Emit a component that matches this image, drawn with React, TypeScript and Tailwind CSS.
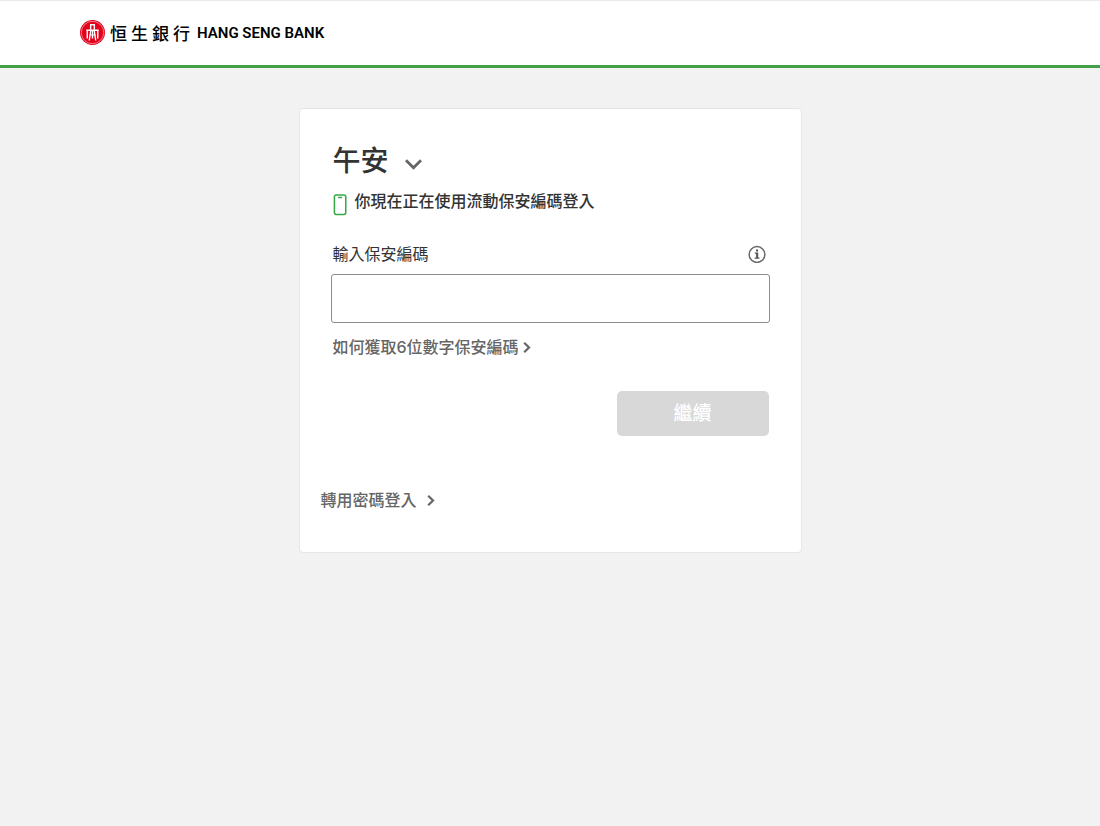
import { useState } from 'react';

const LOGO_CHARACTERS = ['恒', '生', '銀', '行'];

function BankEmblem() {
  return (
    <svg viewBox="0 0 50 50" className="size-[25px] shrink-0" aria-hidden="true">
      <circle cx="25" cy="25" r="25" fill="#e2001a" />
      <circle cx="25" cy="25" r="22.4" fill="none" stroke="#fff" strokeWidth="1" />
      <g fill="none" stroke="#fff" strokeWidth="2.8">
        <path d="M20 9.500h10M21.300 9v10M28.700 9v10" />
        <path d="M12.500 20.500h25M14.500 20.500V37M35.500 20.500V37" />
        <path d="M21.800 19 18.500 41M28.200 19l3.300 22M25 20v17" />
        <path d="M19.500 30h11" strokeWidth="2" />
      </g>
    </svg>
  );
}

function Logo() {
  return (
    <a href="#" className="flex items-center text-black">
      <BankEmblem />
      <span
        lang="zh-Hant"
        className="ml-[5px] flex gap-1 font-['Noto_Sans_CJK_TC',sans-serif] text-[17px] leading-6 font-medium"
      >
        {LOGO_CHARACTERS.map((character) => (
          <span key={character}>{character}</span>
        ))}
      </span>
      <span className="ml-[7px] font-['Roboto',sans-serif] text-[15px] leading-6 font-semibold whitespace-nowrap">
        HANG SENG BANK
      </span>
    </a>
  );
}

function ChevronRight() {
  return (
    <svg viewBox="0 0 8 12" className="h-3 w-2 shrink-0" fill="none" stroke="#666" strokeWidth="2.2" aria-hidden="true">
      <path d="M1.2 1.8 6 6.500 1.2 11.2" />
    </svg>
  );
}

export default function App() {
  const [code, setCode] = useState('');

  return (
    <div
      lang="zh-Hant"
      className="min-h-screen bg-[#f2f2f2] font-['Inter','Noto_Sans_CJK_TC',sans-serif] text-[#333]"
    >
      <header className="border-t border-b-3 border-t-[#eaeaea] border-b-[#42a048] bg-white px-20 pt-[19px] pb-5">
        <div className="flex h-[25px] items-center">
          <Logo />
        </div>
      </header>

      <main className="px-4 py-10">
        <section className="mx-auto max-w-[503px] rounded border border-[#e6e6e6] bg-white px-[31px] pt-8 pb-10">
          <h1 className="px-0.5">
            <button type="button" className="flex items-center gap-4 text-[28px] leading-10 font-medium">
              午安
              <svg
                viewBox="0 0 18 12"
                className="mt-1.5 h-3 w-[18px]"
                fill="none"
                stroke="#666"
                strokeWidth="2.8"
                aria-hidden="true"
              >
                <path d="M1 2.200 8.500 9.700 16 2.200" />
              </svg>
            </button>
          </h1>

          <p className="mt-2 flex gap-2 px-0.5 text-base leading-6 font-medium">
            <svg
              viewBox="0 0 14 22"
              className="mt-[5px] h-[22px] w-3.5 shrink-0"
              fill="none"
              stroke="#35a846"
              strokeWidth="1.5"
              aria-hidden="true"
            >
              <rect x="1.4" y="1" width="11.4" height="19.4" rx="1.8" />
              <path d="M5.100 3.500h4" />
            </svg>
            你現在正在使用流動保安編碼登入
          </p>

          <form onSubmit={(event) => event.preventDefault()}>
            <div className="mt-[26px] flex items-center justify-between pr-1 pl-0.5">
              <label htmlFor="security-code" className="text-base leading-6">
                輸入保安編碼
              </label>
              <button type="button" aria-label="說明">
                <svg viewBox="0 0 18 18" className="size-[18px]" fill="none" aria-hidden="true">
                  <circle cx="9" cy="9.500" r="7.9" stroke="#666" strokeWidth="1.5" />
                  <path fill="#555" d="M8 4.500h2.100v2H8zM6.800 7.600h3.400v4.900h1.200v1.200H6.700v-1.200h1.400V8.800H6.800z" />
                </svg>
              </button>
            </div>
            <input
              id="security-code"
              type="text"
              inputMode="numeric"
              autoComplete="one-time-code"
              value={code}
              onChange={(event) => setCode(event.target.value)}
              className="mt-2 block h-[49px] w-full rounded-[3px] border border-[#8c8c8c] bg-white px-3 text-base outline-none"
            />
            <a href="#" className="mt-3 flex w-fit items-center gap-1 px-0.5 text-base leading-6 font-medium text-[#666]">
              如何獲取6位數字保安編碼
              <ChevronRight />
            </a>
            <div className="mt-8 flex justify-end pr-px">
              <button
                type="submit"
                disabled
                className="h-[45px] w-38 rounded-[5px] bg-[#d8d8d8] text-[19px] leading-6 font-medium text-white"
              >
                繼續
              </button>
            </div>
          </form>

          <a href="#" className="mt-[52px] -ml-2.5 flex w-fit items-center gap-2.5 text-base leading-6 font-medium text-[#666]">
            轉用密碼登入
            <ChevronRight />
          </a>
        </section>
      </main>
    </div>
  );
}
